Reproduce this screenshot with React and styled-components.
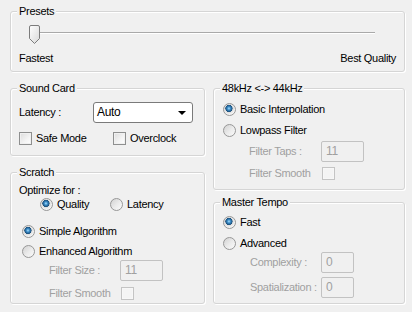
import styled, { createGlobalStyle } from 'styled-components';

const GlobalStyle = createGlobalStyle`
  * { box-sizing: border-box; }
  body {
    margin: 0;
    background: #f0f0f0;
    font-family: "Liberation Sans", Arial, sans-serif;
    font-size: 11px;
    letter-spacing: -0.3px;
    color: #000;
  }
`;

function App() {
    return (
        <Page>
            <GlobalStyle />
            <Group $h={67}>
                <Legend>Presets</Legend>
                <Slider>
                    <Thumb width="11" height="19" viewBox="0 0 11 19">
                        <defs>
                            <linearGradient id="tg" x1="0" y1="0" x2="1" y2="1">
                                <stop offset="0" stopColor="#ffffff" />
                                <stop offset="1" stopColor="#d8d8d8" />
                            </linearGradient>
                        </defs>
                        <path d="M0.5 2 Q0.5 0.5 2 0.5 H9 Q10.5 0.5 10.5 2 V13.5 L5.5 18.5 L0.5 13.5 Z"
                            fill="url(#tg)" stroke="#7c7c7c" />
                    </Thumb>
                </Slider>
                <SliderLabels>
                    <span>Fastest</span>
                    <span>Best Quality</span>
                </SliderLabels>
            </Group>

            <Columns>
                <Column $gap={10}>
                    <Group $h={74}>
                        <Legend>Sound Card</Legend>
                        <Row $mt={7} $h={21}>
                            <Label $w={74}>Latency :</Label>
                            <Select>
                                <span>Auto</span>
                                <Arrow />
                            </Select>
                        </Row>
                        <Row $mt={9}>
                            <Item $w={94}><Check />Safe Mode</Item>
                            <Item><Check />Overclock</Item>
                        </Row>
                    </Group>
                    <Group $grow>
                        <Legend>Scratch</Legend>
                        <Row $mt={5}>Optimize for :</Row>
                        <Row $mt={1} $indent={21}>
                            <Item $w={70}><Radio $on />Quality</Item>
                            <Item><Radio />Latency</Item>
                        </Row>
                        <Row $mt={14} $indent={3}>
                            <Item><Radio $on />Simple Algorithm</Item>
                        </Row>
                        <Row $mt={7} $indent={3}>
                            <Item><Radio />Enhanced Algorithm</Item>
                        </Row>
                        <Row $mt={2} $h={21} $indent={30}>
                            <Label $w={71} $off>Filter Size :</Label>
                            <Input $w={43}>11</Input>
                        </Row>
                        <Row $mt={6} $indent={30}>
                            <Label $w={72} $off>Filter Smooth</Label>
                            <Check $off />
                        </Row>
                    </Group>
                </Column>

                <Column $gap={6}>
                    <Group $h={108}>
                        <Legend>48kHz &lt;-&gt; 44kHz</Legend>
                        <Row $mt={8} $indent={1}>
                            <Item><Radio $on />Basic Interpolation</Item>
                        </Row>
                        <Row $mt={8} $indent={1}>
                            <Item><Radio />Lowpass Filter</Item>
                        </Row>
                        <Row $mt={4} $h={21} $indent={27}>
                            <Label $w={72} $off>Filter Taps :</Label>
                            <Input $w={43}>11</Input>
                        </Row>
                        <Row $mt={5} $indent={27}>
                            <Label $w={73} $off>Filter Smooth</Label>
                            <Check $off />
                        </Row>
                    </Group>
                    <Group $grow>
                        <Legend>Master Tempo</Legend>
                        <Row $mt={7} $indent={1}>
                            <Item><Radio $on />Fast</Item>
                        </Row>
                        <Row $mt={8} $indent={1}>
                            <Item><Radio />Advanced</Item>
                        </Row>
                        <Row $mt={2} $h={21} $indent={28}>
                            <Label $w={71} $off>Complexity :</Label>
                            <Input $w={33}>0</Input>
                        </Row>
                        <Row $mt={4} $h={21} $indent={28}>
                            <Label $w={71} $off>Spatialization :</Label>
                            <Input $w={33}>0</Input>
                        </Row>
                    </Group>
                </Column>
            </Columns>
        </Page>
    )
}

const Page = styled.div`
  width: 412px;
  height: 312px;
  padding: 5px 7px 0 10px;
  display: flex;
  flex-direction: column;
  gap: 10px;
`;

const Group = styled.fieldset`
  margin: 0;
  padding: 0 8px;
  min-width: 0;
  border: 1px solid #d5d5d5;
  border-radius: 3px;
  box-shadow: inset 1px 1px 0 #fff, 1px 1px 0 #fff;
  display: flex;
  flex-direction: column;
  height: ${p => p.$h ? `${p.$h}px` : 'auto'};
  flex: ${p => p.$grow ? 1 : 'none'};
`;

const Legend = styled.legend`
  padding: 0 2px;
  margin-left: -2px;
  line-height: 13px;
  background: #f0f0f0;
`;

const Slider = styled.div`
  position: relative;
  height: 19px;
  margin: 7px 21px 0 10px;

  &::before {
    content: "";
    position: absolute;
    left: 0;
    right: 0;
    top: 7px;
    border-top: 1px solid #a9a9a9;
    border-bottom: 1px solid #fff;
  }
`;

const Thumb = styled.svg`
  position: absolute;
  left: 0;
  top: 0;
  display: block;
`;

const SliderLabels = styled.div`
  display: flex;
  justify-content: space-between;
  margin-top: 8px;
  line-height: 13px;
`;

const Columns = styled.div`
  display: grid;
  grid-template-columns: 195px 192px;
  column-gap: 8px;
  height: 222px;
`;

const Column = styled.div`
  display: flex;
  flex-direction: column;
  gap: ${p => p.$gap}px;
`;

const Row = styled.div`
  display: flex;
  align-items: center;
  height: ${p => p.$h || 13}px;
  margin-top: ${p => p.$mt || 0}px;
  padding-left: ${p => p.$indent || 0}px;
  line-height: 13px;
  white-space: nowrap;
`;

const Label = styled.span`
  width: ${p => p.$w}px;
  flex: none;
  color: ${p => p.$off ? '#a0a0a0' : '#000'};
`;

const Item = styled.label`
  display: flex;
  align-items: center;
  gap: 4px;
  width: ${p => p.$w ? `${p.$w}px` : 'auto'};
  flex: none;
`;

const Select = styled.div`
  width: 100px;
  height: 21px;
  border: 1px solid #7a7a7a;
  border-radius: 3px;
  background: #fff;
  display: flex;
  align-items: center;
  justify-content: space-between;
  padding: 0 6px 0 3px;
  font-size: 12px;
`;

const Arrow = styled.span`
  width: 0;
  height: 0;
  border-left: 4px solid transparent;
  border-right: 4px solid transparent;
  border-top: 4px solid #000;
`;

const Check = styled.span`
  width: 13px;
  height: 13px;
  flex: none;
  border: 1px solid ${p => p.$off ? '#c4c4c4' : '#8e8f8f'};
  background: ${p => p.$off
    ? '#f4f4f4'
    : 'linear-gradient(135deg, #dcdcdc 0%, #f4f4f4 60%, #fff 100%)'};
  box-shadow: inset 0 0 0 1px ${p => p.$off ? '#f7f7f7' : '#f0f0f0'};
`;

const Radio = styled.span`
  width: 13px;
  height: 13px;
  flex: none;
  border-radius: 50%;
  border: 1px solid #979797;
  background: ${p => p.$on
    ? 'radial-gradient(circle at 45% 40%, #a8e0ff 0, #3c8dc8 1.6px, #1a4e7a 3.4px, #dcdcdc 3.8px, #f4f4f4 6px)'
    : 'linear-gradient(135deg, #d2d2d2 0%, #ececec 55%, #fafafa 100%)'};
`;

const Input = styled.div`
  width: ${p => p.$w}px;
  height: 21px;
  border: 1px solid #c2c2c2;
  border-radius: 2px;
  color: #a0a0a0;
  padding: 0 4px;
  font-size: 12px;
  display: flex;
  align-items: center;
`;

export default App;
